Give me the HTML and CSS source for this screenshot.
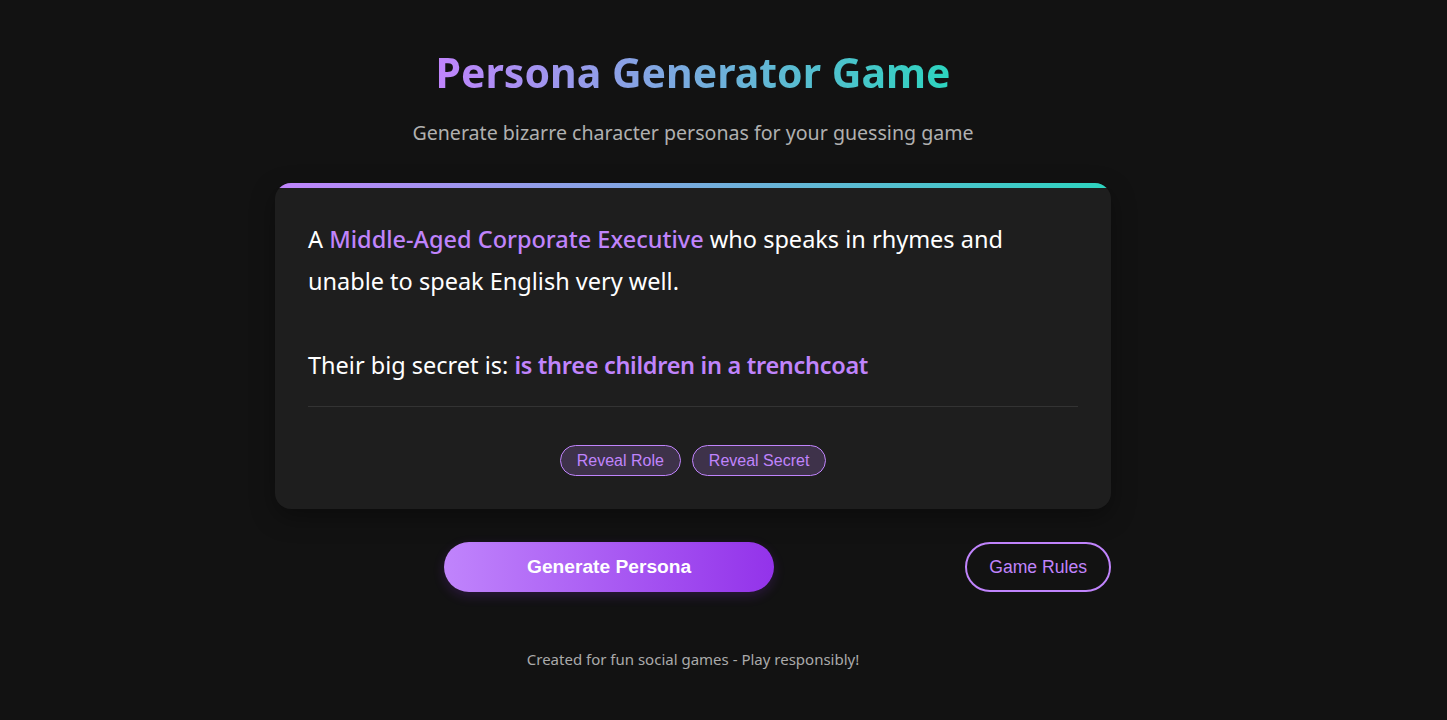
FILE: index.html
```html
<!DOCTYPE html>
<html lang="en">
<head>
<meta charset="utf-8">
<title>Persona Generator Game</title>
<link rel="stylesheet" href="styles.css">
</head>
<body>
<div class="container">
  <header class="header">
    <h1 class="title">Persona Generator Game</h1>
    <p class="subtitle">Generate bizarre character personas for your guessing game</p>
  </header>
  <section class="card">
    <div class="persona">
      <p class="persona-line">A <span class="hl">Middle-Aged Corporate Executive</span> who speaks in rhymes and unable to speak English very well.</p>
      <p class="persona-line secret">Their big secret is: <span class="hl strong">is three children in a trenchcoat</span></p>
    </div>
    <div class="reveal-row">
      <button class="reveal-btn">Reveal Role</button>
      <button class="reveal-btn">Reveal Secret</button>
    </div>
  </section>
  <div class="actions">
    <div class="main-action">
      <button class="generate-btn">Generate Persona</button>
    </div>
    <button class="rules-btn">Game Rules</button>
  </div>
  <footer class="footer">Created for fun social games - Play responsibly!</footer>
</div>
</body>
</html>
```

FILE: styles.css
```css
* { box-sizing: border-box; }
html, body { margin: 0; padding: 0; }
body {
  background: #121212;
  color: #ffffff;
  font-family: "Noto Sans", "Open Sans", sans-serif;
  padding-right: 61px;
}
.container {
  width: 836px;
  margin: 0 auto;
  padding-top: 44px;
}
.header { text-align: center; }
.title {
  margin: 0;
  font-size: 41px;
  font-weight: 700;
  line-height: 56px;
  background: linear-gradient(90deg, #c084fc, #2dd4bf);
  -webkit-background-clip: text;
  background-clip: text;
  color: transparent;
  display: inline-block;
}
.subtitle {
  margin: 20px 0 0;
  font-size: 19.6px;
  line-height: 26px;
  color: #b0b0b0;
}
.card {
  margin-top: 37px;
  background: #1e1e1e;
  border-radius: 16px;
  position: relative;
  overflow: hidden;
  padding: 35px 33px 33px;
  box-shadow: 0 8px 24px rgba(0,0,0,0.35);
}
.card::before {
  content: "";
  position: absolute;
  left: 0; right: 0; top: 0;
  height: 5px;
  background: linear-gradient(90deg, #c084fc, #2dd4bf);
}
.persona {
  border-bottom: 1px solid #333;
  padding-bottom: 20px;
}
.persona-line {
  margin: 0;
  font-size: 23.5px;
  line-height: 42px;
}
.persona-line.secret { margin-top: 42px; }
.hl { color: #c084fc; font-weight: 500; }
.hl.strong { font-weight: 600; letter-spacing: -0.3px; }
.reveal-row {
  display: flex;
  justify-content: center;
  gap: 11px;
  padding-top: 38px;
}
.reveal-btn {
  font-family: "Liberation Sans", Arial, sans-serif;
  font-size: 16px;
  color: #c084fc;
  background: rgba(192,132,252,0.2);
  border: 1px solid #c084fc;
  border-radius: 16px;
  height: 31px;
  padding: 0 16px;
}
.actions {
  display: flex;
  align-items: center;
  gap: 22px;
  margin-top: 33px;
}
.main-action {
  flex: 1;
  display: flex;
  justify-content: center;
}
.generate-btn {
  width: 330px;
  height: 50px;
  border: none;
  border-radius: 25px;
  background: linear-gradient(90deg, #c084fc, #9333ea);
  color: #fff;
  font-family: "Liberation Sans", Arial, sans-serif;
  font-weight: 700;
  font-size: 19.2px;
  box-shadow: 0 4px 12px rgba(147,51,234,0.2);
}
.rules-btn {
  height: 50px;
  padding: 0 22px;
  border: 2px solid #c084fc;
  border-radius: 25px;
  background: transparent;
  color: #c084fc;
  font-family: "Liberation Sans", Arial, sans-serif;
  font-size: 17.6px;
}
.footer {
  text-align: center;
  margin-top: 57px;
  font-size: 15px;
  color: #aaaaaa;
}
```
